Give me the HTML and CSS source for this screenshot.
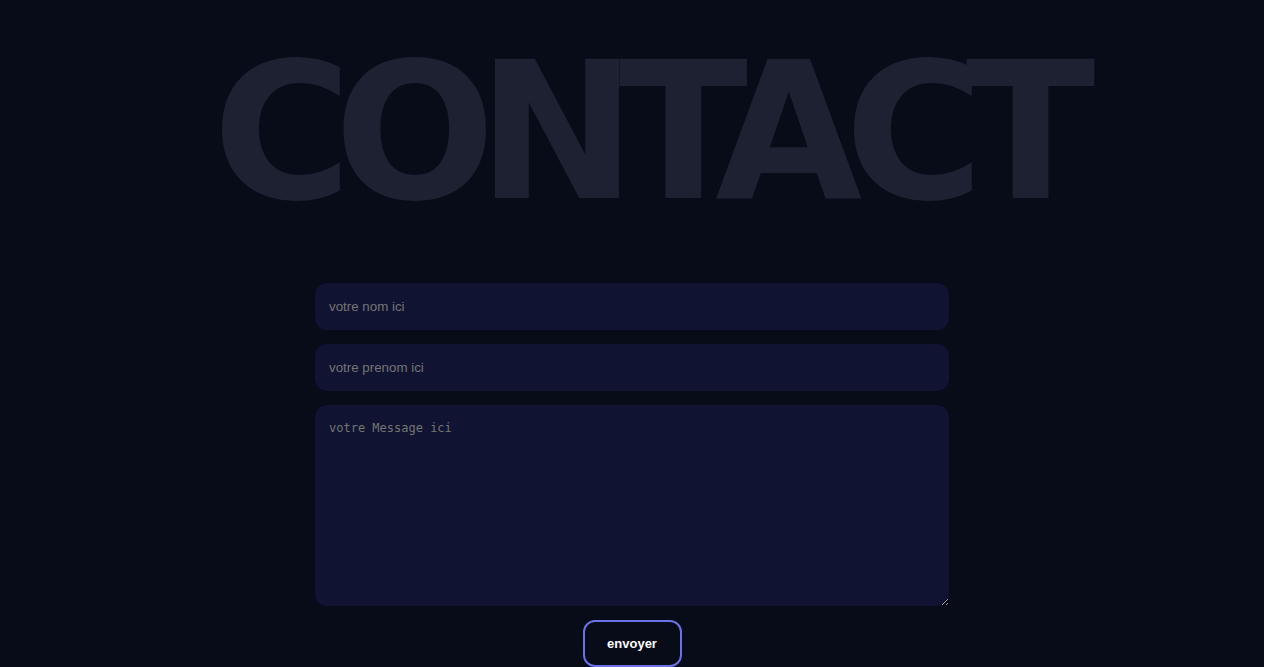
FILE: index.html
```html
<!DOCTYPE html>
<html lang="fr">
<head>
<meta charset="utf-8">
<title>Contact</title>
<link rel="stylesheet" href="styles.css">
</head>
<body>
<main class="page">
  <h1 class="title">CONTACT</h1>
  <form class="form">
    <input class="field" type="text" placeholder="votre nom ici">
    <input class="field" type="text" placeholder="votre prenom ici">
    <textarea class="field area" placeholder="votre Message ici"></textarea>
    <button class="send" type="button">envoyer</button>
  </form>
</main>
</body>
</html>
```
FILE: styles.css
```css
html, body {
  margin: 0;
  padding: 0;
  background: #080b18;
  height: 100%;
  overflow: hidden;
}
.page {
  display: flex;
  flex-direction: column;
  align-items: center;
  padding-top: 22px;
}
.title {
  margin: 0;
  padding-left: 26px;
  font-family: "DejaVu Sans", Verdana, sans-serif;
  font-weight: bold;
  font-size: 190px;
  line-height: 221px;
  letter-spacing: -18px;
  color: #1e2131;
}
.form {
  margin-top: 40px;
  width: 634px;
  display: flex;
  flex-direction: column;
  align-items: center;
  gap: 14px;
}
.field {
  box-sizing: border-box;
  width: 100%;
  height: 47px;
  border: none;
  border-radius: 12px;
  background: #101331;
  padding: 0 14px;
  color: #ddd;
  font-family: "Liberation Sans", Arial, sans-serif;
  font-size: 13.333px;
  outline: none;
}
.field::placeholder {
  color: #757575;
}
.area {
  height: 201px;
  padding: 16px 14px 14px;
  font-family: "DejaVu Sans Mono", monospace;
  font-size: 12px;
  line-height: 15px;
}
.send {
  box-sizing: border-box;
  width: 99px;
  height: 47px;
  background: transparent;
  border: 2px solid #6a72e6;
  border-radius: 12px;
  color: #fff;
  font-family: "Liberation Sans", Arial, sans-serif;
  font-weight: bold;
  font-size: 13px;
}
```
